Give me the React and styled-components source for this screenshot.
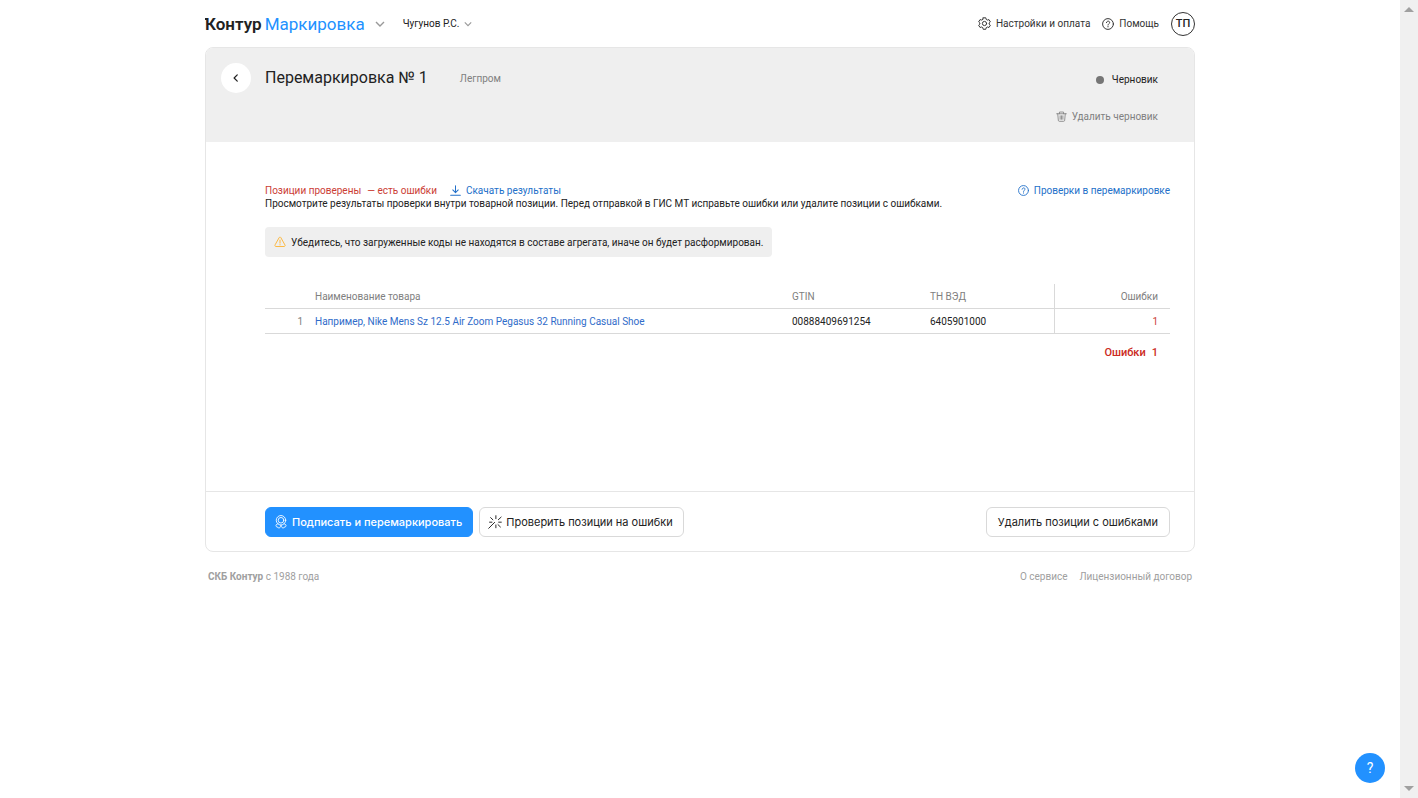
import React from 'react';
import styled, { createGlobalStyle } from 'styled-components';

const GlobalStyle = createGlobalStyle`
  * {
    box-sizing: border-box;
  }

  body {
    margin: 0;
    background: #fff;
    color: #222;
    font-family: Roboto, 'Liberation Sans', sans-serif;
    font-size: 10px;
    line-height: 13px;
  }

  button {
    font-family: inherit;
    cursor: pointer;
  }

  a {
    color: inherit;
    text-decoration: none;
  }
`;

const Shell = styled.div`
  display: flex;
  min-height: 100vh;
`;

const Page = styled.div`
  flex: 1;
  min-width: 0;
`;

const Content = styled.div`
  max-width: 990px;
  margin: 0 auto;
`;

const ScrollTrack = styled.div`
  display: flex;
  flex-direction: column;
  justify-content: space-between;
  align-items: center;
  width: 18px;
  padding: 6px 0;
  background: #f0f0f0;
`;

const TopBar = styled.header`
  display: flex;
  align-items: center;
  height: 47px;
`;

const Logo = styled.a`
  display: flex;
  gap: 3px;
  font-size: 17px;
  line-height: 20px;
  color: #2291ff;
`;

const LogoBrand = styled.span`
  position: relative;
  font-weight: 600;
  color: #222;

  &::before {
    content: '';
    position: absolute;
    left: 0;
    top: 4px;
    width: 3px;
    height: 2px;
    background: #222;
  }
`;

const PlainButton = styled.button`
  display: flex;
  align-items: center;
  gap: 5px;
  padding: 0;
  border: 0;
  background: none;
  color: ${(props) => props.$color || '#222'};
  font-size: 10px;
  line-height: 13px;
`;

const ServiceToggle = styled(PlainButton)`
  margin: 0 18px 0 10px;
`;

const TopLinks = styled.nav`
  display: flex;
  align-items: center;
  gap: 12px;
  margin-left: auto;
`;

const IconLink = styled.a`
  display: flex;
  align-items: center;
  gap: 5px;
  color: ${(props) => props.$color || '#333'};
`;

const Avatar = styled.button`
  width: 24px;
  height: 24px;
  padding: 0;
  border: 1px solid #333;
  border-radius: 50%;
  background: #fff;
  color: #222;
  font-size: 11px;
  font-weight: 500;
`;

const Card = styled.main`
  border: 1px solid #e6e6e6;
  border-radius: 8px;
  overflow: hidden;
`;

const CardHeader = styled.div`
  display: flex;
  justify-content: space-between;
  min-height: 94px;
  padding: 15px 36px 0 15px;
  background: #efefef;
`;

const TitleRow = styled.div`
  display: flex;
  align-items: center;
  height: 30px;
`;

const BackButton = styled.button`
  display: flex;
  align-items: center;
  justify-content: center;
  width: 30px;
  height: 30px;
  padding: 0;
  border: 0;
  border-radius: 50%;
  background: #fff;
  color: #222;
`;

const Title = styled.h1`
  margin: 0 32px 0 14px;
  font-size: 16px;
  line-height: 20px;
  font-weight: 400;
`;

const Muted = styled.span`
  color: #808080;
`;

const StatusColumn = styled.div`
  display: flex;
  flex-direction: column;
  align-items: flex-end;
  gap: 24px;
  padding-top: 10px;
`;

const Status = styled.div`
  display: flex;
  align-items: center;
  gap: 8px;
`;

const Dot = styled.span`
  width: 8px;
  height: 8px;
  border-radius: 50%;
  background: #757575;
`;

const CardBody = styled.section`
  min-height: 349px;
  padding: 42px 24px 24px 59px;
`;

const ResultRow = styled.div`
  display: flex;
  align-items: center;
  gap: 13px;

  & > :last-child {
    margin-left: auto;
  }
`;

const ErrorText = styled.span`
  display: flex;
  gap: 6px;
  color: #cb3d35;
`;

const Paragraph = styled.p`
  margin: 0;
`;

const Hint = styled.div`
  display: inline-flex;
  align-items: center;
  gap: 5px;
  height: 30px;
  margin: 17px 0 27px;
  padding: 0 9px;
  border-radius: 4px;
  background: #efefef;
`;

const Table = styled.table`
  width: 100%;
  table-layout: fixed;
  border-spacing: 0;
`;

const Col = styled.col`
  width: ${(props) => props.$width}px;
`;

const Th = styled.th`
  height: 25px;
  padding: 0 ${(props) => (props.$right ? 12 : 0)}px 0 0;
  border-bottom: 1px solid #d9d9d9;
  border-left: ${(props) => (props.$divider ? '1px solid #d9d9d9' : '0')};
  text-align: ${(props) => (props.$right ? 'right' : 'left')};
  font-weight: 400;
  color: #808080;
`;

const Td = styled(Th).attrs({ as: 'td' })`
  color: ${(props) => props.$color || '#222'};
`;

const Total = styled.div`
  display: flex;
  justify-content: flex-end;
  gap: 6px;
  padding: 12px 12px 0 0;
  font-size: 11px;
  font-weight: 500;
  color: #cb2a22;
`;

const ActionBar = styled.div`
  display: flex;
  align-items: center;
  gap: 6px;
  height: 60px;
  padding: 0 24px 0 59px;
  border-top: 1px solid #e6e6e6;

  & > :last-child {
    margin-left: auto;
  }
`;

const Button = styled.button`
  display: flex;
  align-items: center;
  gap: 4px;
  height: 30px;
  padding: 0 ${(props) => (props.$plain ? '11px' : '10px 0 8px')};
  border: 1px solid ${(props) => (props.$primary ? '#2291ff' : '#d9d9d9')};
  border-radius: 6px;
  background: ${(props) => (props.$primary ? '#2291ff' : '#fff')};
  color: ${(props) => (props.$primary ? '#fff' : '#222')};
  font-family: Inter, 'Liberation Sans', sans-serif;
  font-size: 11px;
  line-height: 16px;
  font-weight: ${(props) => (props.$primary ? 500 : 400)};
`;

const PageFooter = styled.footer`
  display: flex;
  justify-content: space-between;
  padding: 18px 3px;
  color: #a0a0a0;
`;

const FooterLinks = styled.div`
  display: flex;
  gap: 12px;
`;

const HelpButton = styled.button`
  position: fixed;
  right: 33px;
  bottom: 15px;
  width: 30px;
  height: 30px;
  padding: 0;
  border: 0;
  border-radius: 50%;
  background: #2291ff;
  color: #fff;
  font-size: 14px;
`;

const Icon = ({ size = 12, box = 16, stroke = 1, children }) => (
  <svg
    width={size}
    height={size}
    viewBox={`0 0 ${box} ${box}`}
    fill="none"
    stroke="currentColor"
    strokeWidth={stroke}
    strokeLinecap="round"
    strokeLinejoin="round"
    aria-hidden="true"
  >
    {children}
  </svg>
);

const ChevronDown = ({ size }) => (
  <svg width={size} height={size} viewBox="0 0 10 10" fill="none" stroke="#999" strokeWidth="1.4" aria-hidden="true">
    <path d="M1 3l4 4 4-4" />
  </svg>
);

const GearIcon = () => (
  <Icon size={13} stroke={1.2}>
    <path d="M6.4 1h3.2l.5 2 1.4.8 2-.6 1.7 2.8-1.5 1.4v1.3l1.5 1.4-1.7 2.8-2-.6-1.4.8-.5 2H6.4l-.5-2-1.4-.8-2 .6L.8 10.100l1.500-1.400V7.400L.8 6l1.700-2.800 2 .6L5.900 3z" />
    <circle cx="8" cy="8" r="2.6" />
  </Icon>
);

const QuestionIcon = ({ size = 12 }) => (
  <Icon size={size} stroke={1.3}>
    <circle cx="8" cy="8" r="7.2" />
    <path d="M5.900 6.200c.2-2.800 4.400-2.600 4.300-.1C10.200 7.600 8 7.700 8 9.400M8 11.300v.6" />
  </Icon>
);

const TrashIcon = () => (
  <Icon size={11} stroke={1.2}>
    <path d="M1 4h14M5 4V1.500h6V4M2.500 4l.9 9.500c.1 1 .6 1.500 1.500 1.500h6.200c.9 0 1.400-.5 1.500-1.500L13.500 4M6 7v5M8 7v5M10 7v5" />
  </Icon>
);

const DownloadIcon = () => (
  <Icon size={11} stroke={1.5}>
    <path d="M8 1v10M4 7.200l4 4 4-4M1 15h14" />
  </Icon>
);

const WarningIcon = () => (
  <Icon stroke={1.3}>
    <path d="M6.900 2.100c.5-.9 1.700-.9 2.200 0l5.600 10c.5.900-.1 1.900-1.100 1.900H2.400c-1 0-1.600-1-1.100-1.900zM8 5.500v4M8 11.500v.4" />
  </Icon>
);

const SealIcon = () => (
  <Icon size={14}>
    <circle cx="8" cy="6" r="5.4" />
    <circle cx="8" cy="6" r="3.2" />
    <path d="M4.500 10c-1.900.2-2.700 1.700-2 3 .4.800 1.300 1 2 .9.200.9 1.300 1.300 2 .7.900-.7 1.200-2 1.500-3 .3 1 .6 2.300 1.500 3 .7.600 1.800.2 2-.7.700.1 1.600-.1 2-.9.700-1.300-.1-2.800-2-3" />
  </Icon>
);

const WandIcon = () => (
  <Icon size={14} stroke={1.1}>
    <path d="M.8 15.200L7.600 8.400M9 .8v3.400M9 11.400v3.200M3 3l2.600 2.500M15 2.400l-3.200 3M1.800 8.200h2.700M12.200 8.200h3M11.400 11l2.800 2.700" />
  </Icon>
);

const rows = [
  {
    id: 1,
    name: 'Например, Nike Mens Sz 12.5 Air Zoom Pegasus 32 Running Casual Shoe',
    gtin: '00888409691254',
    tnved: '6405901000',
    errors: 1,
  },
];

const App = () => {
  return (
    <Shell>
      <GlobalStyle />
      <Page>
        <Content>
          <TopBar>
            <Logo href="#">
              <LogoBrand>Контур</LogoBrand>
              <span>Маркировка</span>
            </Logo>
            <ServiceToggle type="button" aria-label="Сервисы">
              <ChevronDown size={10} />
            </ServiceToggle>
            <PlainButton type="button">
              Чугунов Р.С.
              <ChevronDown size={8} />
            </PlainButton>
            <TopLinks>
              <IconLink href="#">
                <GearIcon />
                Настройки и оплата
              </IconLink>
              <IconLink href="#">
                <QuestionIcon />
                Помощь
              </IconLink>
              <Avatar type="button">ТП</Avatar>
            </TopLinks>
          </TopBar>

          <Card>
            <CardHeader>
              <TitleRow>
                <BackButton type="button" aria-label="Назад">
                  <Icon size={10} box={8}>
                    <path d="M5 1.500L2.500 4 5 6.500" />
                  </Icon>
                </BackButton>
                <Title>Перемаркировка № 1</Title>
                <Muted>Легпром</Muted>
              </TitleRow>
              <StatusColumn>
                <Status>
                  <Dot />
                  Черновик
                </Status>
                <PlainButton type="button" $color="#808080">
                  <TrashIcon />
                  Удалить черновик
                </PlainButton>
              </StatusColumn>
            </CardHeader>

            <CardBody>
              <ResultRow>
                <ErrorText>
                  <span>Позиции проверены</span>
                  <span>— есть ошибки</span>
                </ErrorText>
                <IconLink href="#" $color="#2270c9">
                  <DownloadIcon />
                  Скачать результаты
                </IconLink>
                <IconLink href="#" $color="#2270c9">
                  <QuestionIcon size={11} />
                  Проверки в перемаркировке
                </IconLink>
              </ResultRow>
              <Paragraph>
                Просмотрите результаты проверки внутри товарной позиции. Перед отправкой в ГИС МТ
                исправьте ошибки или удалите позиции с ошибками.
              </Paragraph>
              <Hint>
                <IconLink as="span" $color="#fcb73e">
                  <WarningIcon />
                </IconLink>
                Убедитесь, что загруженные коды не находятся в составе агрегата, иначе он будет
                расформирован.
              </Hint>

              <Table>
                <colgroup>
                  <Col $width={50} />
                  <col />
                  <Col $width={138} />
                  <Col $width={124} />
                  <Col $width={116} />
                </colgroup>
                <thead>
                  <tr>
                    <Th />
                    <Th>Наименование товара</Th>
                    <Th>GTIN</Th>
                    <Th>ТН ВЭД</Th>
                    <Th $right $divider>Ошибки</Th>
                  </tr>
                </thead>
                <tbody>
                  {rows.map((row) => (
                    <tr key={row.id}>
                      <Td $right $color="#808080">{row.id}</Td>
                      <Td $color="#2f6bc9"><a href="#">{row.name}</a></Td>
                      <Td>{row.gtin}</Td>
                      <Td>{row.tnved}</Td>
                      <Td $right $divider $color="#cb3d35">{row.errors}</Td>
                    </tr>
                  ))}
                </tbody>
              </Table>
              <Total>
                <span>Ошибки</span>
                <span>1</span>
              </Total>
            </CardBody>

            <ActionBar>
              <Button type="button" $primary>
                <SealIcon />
                Подписать и перемаркировать
              </Button>
              <Button type="button">
                <WandIcon />
                Проверить позиции на ошибки
              </Button>
              <Button type="button" $plain>Удалить позиции с ошибками</Button>
            </ActionBar>
          </Card>

          <PageFooter>
            <span><b>СКБ Контур</b> с 1988 года</span>
            <FooterLinks>
              <a href="#">О сервисе</a>
              <a href="#">Лицензионный договор</a>
            </FooterLinks>
          </PageFooter>
        </Content>
        <HelpButton type="button" aria-label="Справка">?</HelpButton>
      </Page>
      <ScrollTrack aria-hidden="true">
        <svg width="10" height="6" viewBox="0 0 10 6" fill="#a0a0a0">
          <path d="M0 6l5-5 5 5z" />
        </svg>
        <svg width="10" height="6" viewBox="0 0 10 6" fill="#a0a0a0">
          <path d="M0 0l5 5 5-5z" />
        </svg>
      </ScrollTrack>
    </Shell>
  );
};

export default App;
